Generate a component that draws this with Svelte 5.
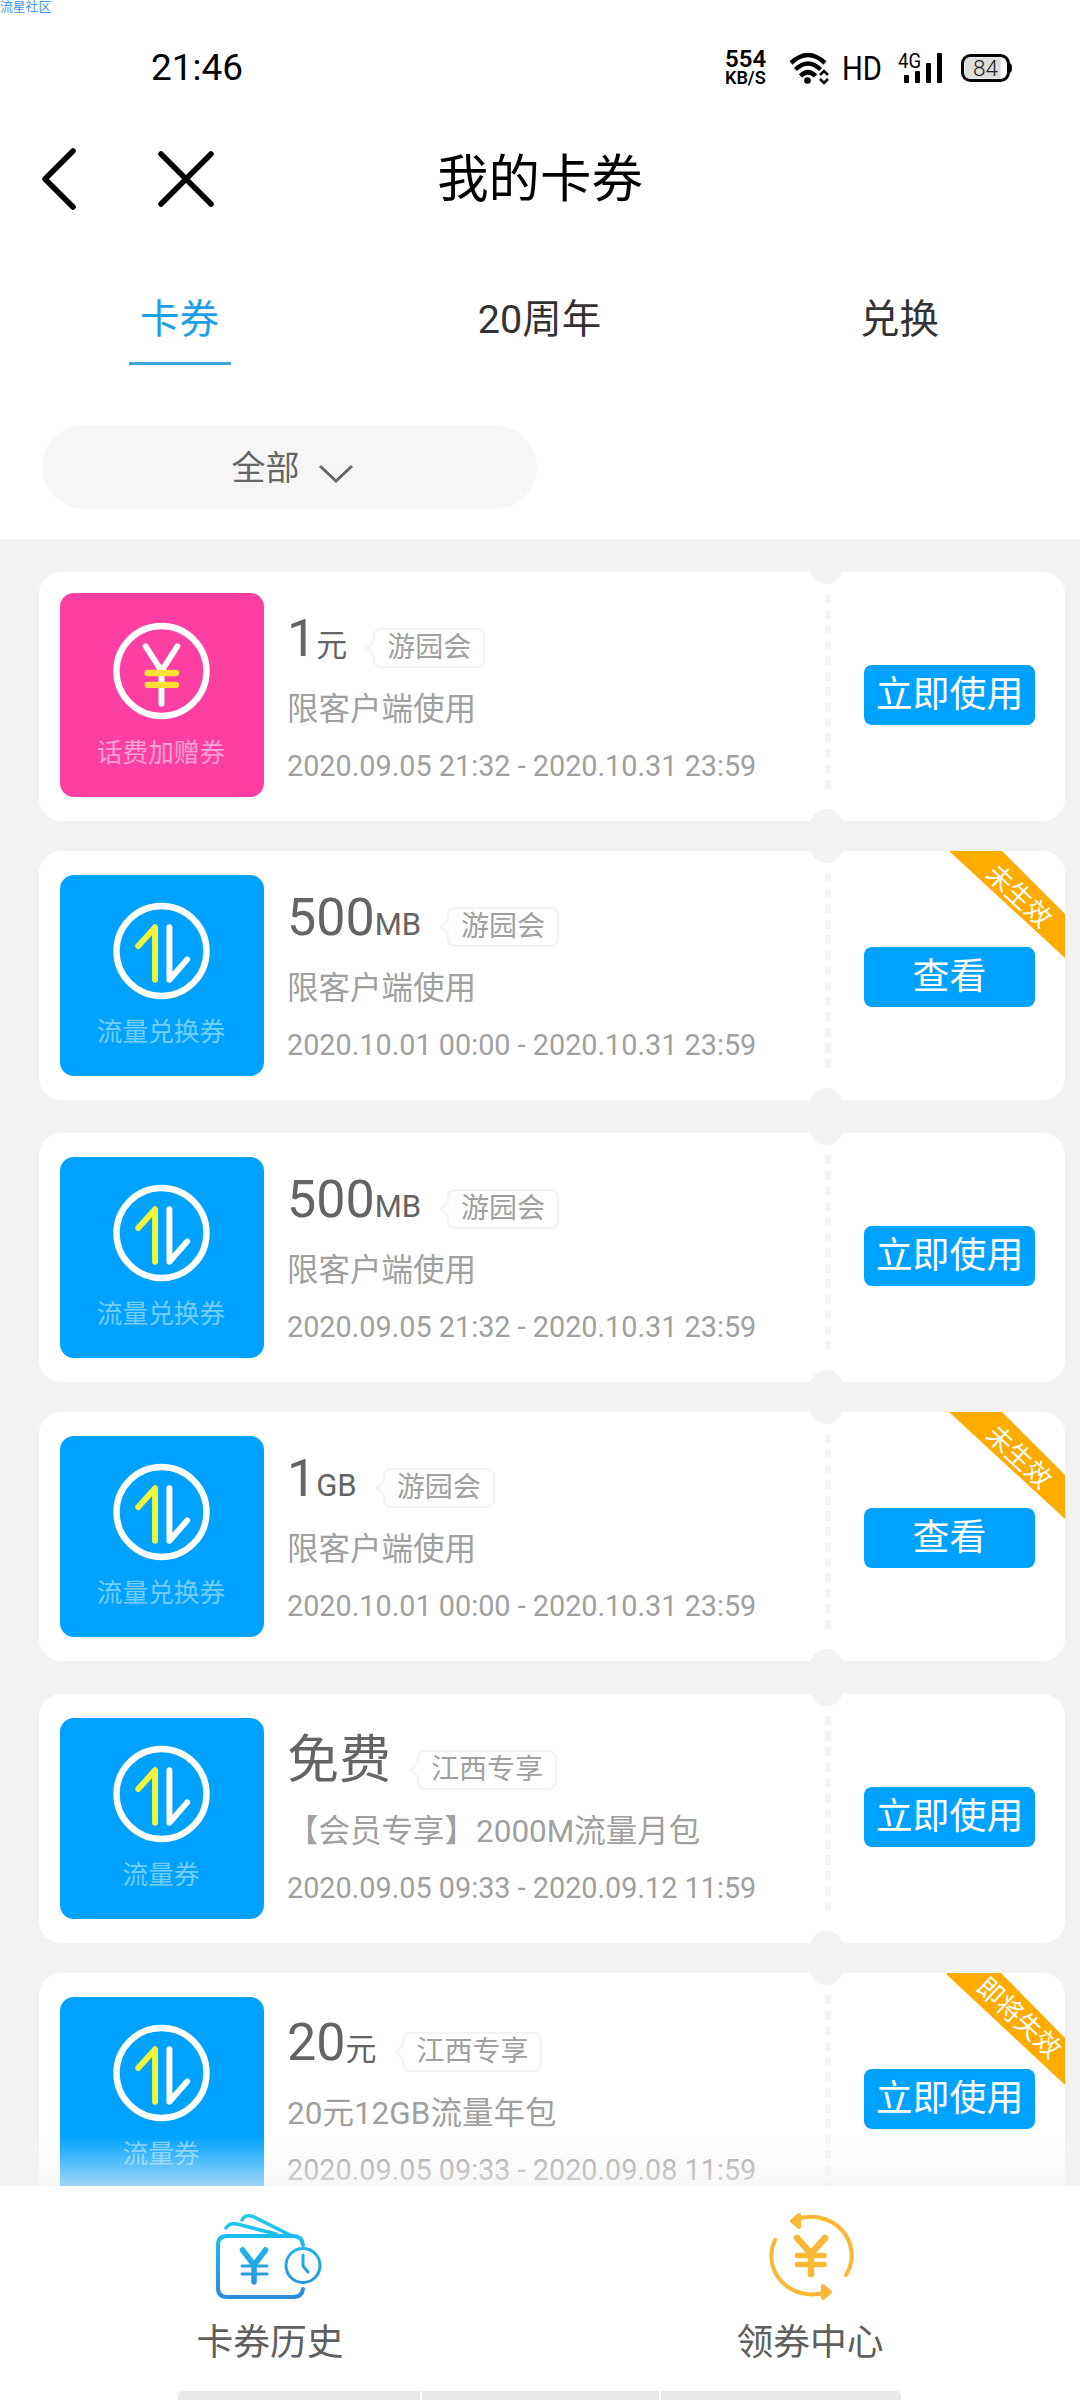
<script>
  const tabs = ['卡券', '20周年', '兑换'];
  let activeTab = '卡券';

  const coupons = [
    { kind: 'fee', type: '话费加赠券', value: '1', unit: '元', tag: '游园会', desc: '限客户端使用', date: '2020.09.05 21:32 - 2020.10.31 23:59', action: '立即使用' },
    { kind: 'data', type: '流量兑换券', value: '500', unit: 'MB', tag: '游园会', desc: '限客户端使用', date: '2020.10.01 00:00 - 2020.10.31 23:59', action: '查看', ribbon: '未生效' },
    { kind: 'data', type: '流量兑换券', value: '500', unit: 'MB', tag: '游园会', desc: '限客户端使用', date: '2020.09.05 21:32 - 2020.10.31 23:59', action: '立即使用' },
    { kind: 'data', type: '流量兑换券', value: '1', unit: 'GB', tag: '游园会', desc: '限客户端使用', date: '2020.10.01 00:00 - 2020.10.31 23:59', action: '查看', ribbon: '未生效' },
    { kind: 'data', type: '流量券', value: '免费', unit: '', tag: '江西专享', desc: '【会员专享】2000M流量月包', date: '2020.09.05 09:33 - 2020.09.12 11:59', action: '立即使用' },
    { kind: 'data', type: '流量券', value: '20', unit: '元', tag: '江西专享', desc: '20元12GB流量年包', date: '2020.09.05 09:33 - 2020.09.08 11:59', action: '立即使用', ribbon: '即将失效' }
  ];
</script>

<div class="page">
  <span class="watermark">流星社区</span>

  <div class="status">
    <span class="time">21:46</span>
    <div class="speed"><b>554</b><small>KB/S</small></div>
    <svg class="wifi" width="42" height="34" viewBox="0 0 42 34" fill="none" stroke="#000">
      <path d="M2 12Q19 -4 36 12" stroke-width="4.500" />
      <path d="M6.500 18.500Q19 6.500 31.500 18.500" stroke-width="4.500" />
      <path d="M11.500 25Q19 17.500 26.500 25" stroke-width="4.500" />
      <circle cx="18.500" cy="29.500" r="3.300" fill="#000" stroke="none" />
      <path d="M31 24l4-4 4 4M31 28l4 4 4-4" stroke-width="2.500" />
    </svg>
    <svg class="hd" width="40" height="40" viewBox="0 0 40 40">
      <text x="-1" y="32" font-size="33.500" textLength="40" lengthAdjust="spacingAndGlyphs">HD</text>
    </svg>
    <svg class="signal" width="45" height="40" viewBox="0 0 45 40">
      <text x="0" y="20" font-size="21" textLength="23" lengthAdjust="spacingAndGlyphs">4G</text>
      <rect x="6" y="27" width="5" height="8" rx="1" />
      <rect x="17" y="23" width="5" height="12" rx="1" />
      <rect x="28" y="15" width="5" height="20" rx="1" />
      <rect x="39" y="5" width="5" height="30" rx="1" />
    </svg>
    <svg class="battery" width="52" height="34" viewBox="0 0 52 34">
      <path d="M48 12q3 0 3 5t-3 5z" />
      <rect x="1.500" y="4.500" width="46" height="25" rx="8" fill="#fff" stroke="#000" stroke-width="3" />
      <path d="M9 6.500H39.500V27.500H9Q3.500 27.500 3.500 22V12Q3.500 6.500 9 6.500z" fill="#dcdcdc" />
      <text x="12" y="24.500" font-size="21.500" font-weight="300" textLength="25" lengthAdjust="spacingAndGlyphs" fill="#222">84</text>
    </svg>
  </div>

  <header>
    <svg class="back" width="36" height="64" viewBox="0 0 36 64"><path d="M32 4L4 32L32 60" /></svg>
    <svg class="close" width="58" height="58" viewBox="0 0 58 58"><path d="M4 4L54 54M54 4L4 54" /></svg>
    <h1>我的卡券</h1>
  </header>

  <nav>
    {#each tabs as tab}
      <button class="tab" class:active={activeTab === tab} on:click={() => (activeTab = tab)}><span>{tab}</span></button>
    {/each}
  </nav>

  <div class="filter">
    <div class="select">
      <span>全部</span>
      <svg width="36" height="20" viewBox="0 0 36 20"><path d="M2 2L18 17L34 2" /></svg>
    </div>
  </div>

  <main>
    {#each coupons as c}
      <div class="card">
        <div class="thumb {c.kind}">
          <svg viewBox="0 0 98 98" fill="none" stroke="#fff" stroke-linecap="round" stroke-linejoin="round">
            <circle cx="49" cy="49" r="45.500" stroke-width="6.500" />
            {#if c.kind === 'fee'}
              <path d="M33 24L49 49L65 24M49 49V82" stroke-width="6" />
              <path d="M35 51H63.500M35 63H63.500" stroke="#fedf34" stroke-width="6.500" />
            {:else}
              <path d="M25.500 44L42.500 25V78" stroke="#f0f43c" stroke-width="6" />
              <path d="M57 25V78L75 57.500" stroke-width="6" />
            {/if}
          </svg>
          <span>{c.type}</span>
        </div>

        <div class="info">
          <div class="title">
            <span class="value">{c.value}</span><span class="unit">{c.unit}</span>
            <span class="tag">{c.tag}</span>
          </div>
          <div class="desc">{c.desc}</div>
          <div class="date">{c.date}</div>
        </div>

        <div class="divider"></div>

        <div class="action">
          <button>{c.action}</button>
        </div>
        {#if c.ribbon}
          <div class="ribbon"><span>{c.ribbon}</span></div>
        {/if}
      </div>
    {/each}
    <div class="fade"></div>
  </main>

  <footer>
    <div class="link">
      <svg width="112" height="90" viewBox="0 0 112 90" fill="none" stroke="url(#blue)" stroke-width="4" stroke-linecap="round" stroke-linejoin="round">
        <defs>
          <linearGradient id="blue" gradientUnits="userSpaceOnUse" x1="0" y1="0" x2="0" y2="90">
            <stop offset="0" stop-color="#25c9e8" />
            <stop offset="0.300" stop-color="#18bdf0" />
            <stop offset="1" stop-color="#2f86d2" />
          </linearGradient>
        </defs>
        <path d="M89 33Q88 24 79 24H13Q4 24 4 33V76Q4 85 13 85H79Q88 85 89 77" />
        <path d="M12 16Q15 10.500 23 12L62 22" stroke-width="3.500" />
        <path d="M28 8Q31 2 39 4.500L76 23" stroke-width="3.500" />
        <circle cx="89" cy="53.500" r="17" stroke-width="3" />
        <path d="M89 43V54L94 60" stroke-width="3" />
        <path d="M28.500 38L40 53L51.500 38M40 53V70" stroke-width="5.500" />
        <path d="M28 54H53M28 62H53" stroke-width="3" />
      </svg>
      <span>卡券历史</span>
    </div>
    <div class="link">
      <svg width="92" height="90" viewBox="0 0 92 90" fill="none" stroke="#fbb834" stroke-width="4" stroke-linecap="round" stroke-linejoin="round">
        <path d="M31 8A40.500 38.500 0 0 1 82 63" />
        <path d="M11 28A40.500 38.500 0 0 0 62 80" />
        <path d="M35 3L28 9L35 15Z" fill="#fbb834" />
        <path d="M59 74L66 80L59 86Z" fill="#fbb834" />
        <path d="M33 26L47 41.500L61 26M47 41V62" stroke-width="6.500" />
        <path d="M33.500 43.500H60M33.500 52.500H60" stroke-width="5.500" />
      </svg>
      <span>领券中心</span>
    </div>
  </footer>
  <div class="homebar"><i></i><i></i><i></i></div>
</div>

<style>
  :global(body) { margin: 0; background: #fff; }
  .page { position: relative; display: flex; flex-direction: column; width: 1080px; height: 2400px; overflow: hidden; background: #fff; color: #000; font-family: Roboto, "Noto Sans CJK SC", sans-serif; }
  svg { display: block; flex: none; overflow: visible; }
  button { border: 0; margin: 0; padding: 0; font-family: inherit; background: none; }
  .watermark { position: absolute; left: 0; top: 0; font-size: 12.8px; line-height: 13px; color: #3f97e8; }

  .status { display: flex; align-items: center; height: 136px; padding-left: 151px; }
  .time { width: 574px; font-size: 37px; line-height: 40px; }
  .speed { display: flex; flex-direction: column; width: 64px; }
  .speed b { font-size: 24px; line-height: 20px; font-weight: 600; }
  .speed small { font-size: 18px; line-height: 18px; font-weight: 600; }
  .hd { margin-left: 12px; }
  .signal { margin-left: 15px; }
  .battery { margin-left: 18px; }

  header { position: relative; display: flex; align-items: center; height: 86px; padding-left: 41px; }
  header path { fill: none; stroke: #000; stroke-width: 5.5; stroke-linecap: round; stroke-linejoin: round; }
  .close { margin-left: 80px; }
  h1 { position: absolute; inset: 0; margin: 0; font-size: 51.4px; line-height: 88px; font-weight: 400; text-align: center; pointer-events: none; }

  nav { display: grid; grid-template-columns: repeat(3, 1fr); height: 143px; padding-top: 60px; box-sizing: border-box; }
  .tab { display: flex; flex-direction: column; align-items: center; padding-right: 1px; font-size: 39.5px; line-height: 75px; color: #333; }
  .tab.active { color: #1a9fe8; }
  .tab.active::after { content: ''; width: 102px; height: 3px; margin: 5px -1px 0 0; background: #3fa5d8; }

  .filter { height: 174px; padding: 60px 0 0 42px; box-sizing: border-box; }
  .select { display: flex; align-items: center; justify-content: center; gap: 18px; width: 495px; height: 84px; padding: 2px 0 0 6px; box-sizing: border-box; border-radius: 42px; background: #f6f6f6; color: #666; font-size: 34px; line-height: 50px; }
  .select svg { margin-top: 12px; }
  .select path { fill: none; stroke: #666; stroke-width: 3; }

  main { position: relative; height: 1647px; padding: 33px 15px 0 39px; box-sizing: border-box; overflow: hidden; background: #f2f2f2; }
  .card { position: relative; display: flex; width: 1026px; height: 249px; margin-bottom: 30px; border-radius: 22px; background: #fff; overflow: hidden; }
  .card:nth-child(even) { margin-bottom: 33px; }
  .thumb { display: flex; flex-direction: column; align-items: center; width: 204px; height: 201px; margin: 24px 0 0 21px; border-radius: 14px; background: #00a2ff; }
  .thumb.fee { height: 204px; margin-top: 21px; background: #fd3fa1; }
  .thumb svg { width: 97px; height: 98px; margin: 27px 1px 0 0; }
  .thumb.fee svg { margin-top: 29px; }
  .thumb span { margin: 12px 2px 0 0; font-size: 25.7px; line-height: 40px; color: #73cdfb; }
  .thumb.fee span { margin-top: 13px; color: #fea0d2; }

  .info { width: 558px; padding: 35px 0 0 23px; box-sizing: border-box; }
  .card:nth-child(6) .info { padding-top: 38px; }
  .title { display: flex; align-items: baseline; height: 78px; line-height: 64px; color: #646464; white-space: nowrap; }
  .value { font-size: 52px; }
  .unit { font-size: 31px; }
  .tag { position: relative; top: 1px; margin-left: 26px; padding: 0 12px; border: 2px solid #f3f3f3; border-radius: 8px; font-size: 28px; line-height: 36px; color: #a0a0a0; }
  .tag::before { content: ''; position: absolute; left: -7px; top: 12px; width: 10px; height: 10px; border-left: 2px solid #f3f3f3; border-bottom: 2px solid #f3f3f3; background: #fff; transform: rotate(45deg); }
  .desc { height: 48px; font-size: 31.5px; line-height: 49px; color: #a0a0a0; }
  .date { margin-top: 9px; font-size: 28.8px; line-height: 48px; color: #a0a0a0; white-space: nowrap; }

  .divider { width: 6px; height: 199px; margin: 22px 0 0 3px; background: repeating-linear-gradient(#f4f4f4 0 9px, transparent 9px 15.5px); }
  .card::before, .card::after { content: ''; position: absolute; left: 771px; width: 33px; height: 33px; border-radius: 50%; background: #f2f2f2; }
  .card::before { top: -21px; }
  .card::after { bottom: -21px; }
  .action { display: flex; align-items: center; padding: 0 0 3px 33px; }
  .card:nth-child(even) .action { padding-top: 6px; }
  .action button { width: 171px; height: 60px; border-radius: 8px; background: #00a2ff; color: #fff; font-size: 36.9px; line-height: 60px; }

  .ribbon { position: absolute; right: 0; top: 0; width: 118px; height: 112px; background: #ffab00; clip-path: polygon(2px 0, 55px 0, 118px 63px, 118px 107px); }
  .card:nth-child(6) .ribbon { clip-path: polygon(-2px 0, 54px 0, 118px 65px, 118px 112px); }
  .ribbon span { position: absolute; left: 72px; top: 45px; font-size: 26px; line-height: 30px; color: #fff; white-space: nowrap; transform: translate(-50%, -50%) rotate(43deg); }
  .fade { position: absolute; left: 0; right: 0; bottom: 0; height: 50px; background: linear-gradient(rgba(242, 242, 242, 0), rgba(242, 242, 242, 0.65)); }

  footer { display: grid; grid-template-columns: 1fr 1fr; height: 205px; }
  .link { display: flex; flex-direction: column; align-items: center; padding-top: 26px; font-size: 36.8px; line-height: 50px; color: #606060; }
  .link span { margin: 16px 0 0 0; }
  .homebar { display: grid; grid-template-columns: 242px 237px 240px; gap: 2px; width: 723px; height: 9px; margin-left: 178px; overflow: hidden; border-radius: 5px 5px 0 0; }
  .homebar i { background: #e8e8e8; }
</style>
